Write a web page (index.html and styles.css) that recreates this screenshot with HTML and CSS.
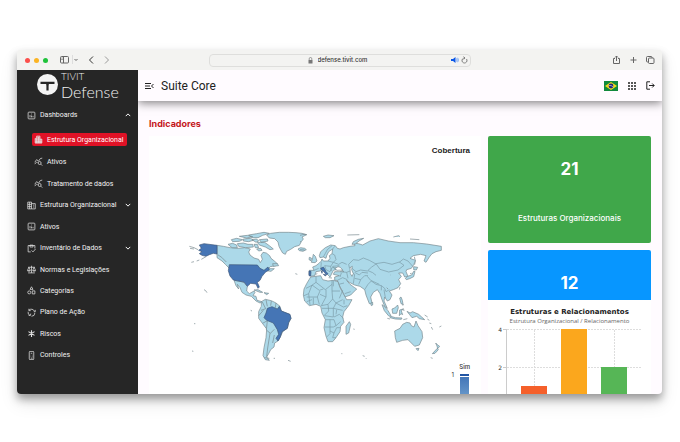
FILE: index.html
```html
<!DOCTYPE html>
<html lang="pt-BR">
<head>
<meta charset="utf-8">
<meta name="viewport" content="width=device-width, initial-scale=1">
<title>Suite Core</title>
<link rel="stylesheet" href="styles.css">
</head>
<body>
<div class="window">
  <div class="titlebar">
    <div class="tools">
      <span class="light red"></span><span class="light yellow"></span><span class="light green"></span>
      <button class="chrome-btn side" aria-label="Barra lateral"><svg width="18" height="10" viewBox="0 0 18 10"><rect x=".5" y="1.500" width="8" height="6.500" rx="1"/><path d="M3.500 1.500V8M1.500 3h1M1.500 4.500h1"/><path d="M12.500 0v9" stroke="#ddd"/><path d="M14.500 4l1.500 1.500L17.500 4"/></svg></button>
      <button class="chrome-btn" aria-label="Voltar"><svg width="6" height="10" viewBox="0 0 6 10"><path d="M5 1.500L1.500 5 5 8.500" stroke="#333"/></svg></button>
      <button class="chrome-btn" aria-label="Avançar"><svg width="6" height="10" viewBox="0 0 6 10"><path d="M1 1.500L4.500 5 1 8.500" stroke="#999"/></svg></button>
    </div>
    <div class="address">
      <svg width="5" height="7" viewBox="0 0 5 7"><rect x=".5" y="3" width="4" height="3.500" fill="#777"/><path d="M1.200 3V1.800a1.300 1.300 0 0 1 2.600 0V3" fill="none" stroke="#777" stroke-width=".7"/></svg>
      <input type="text" aria-label="Endereço" value="defense.tivit.com">
      <span class="address-end">
        <svg width="8" height="8" viewBox="0 0 8 8"><path d="M0 3h2l2.500-2v6L2 5H0z" fill="#0b57e8"/><path d="M5.500 2.500q1 1.500 0 3M6.700 1.800q1.300 2.200 0 4.400" fill="none" stroke="#4c8cf5" stroke-width=".7"/></svg>
        <svg width="7" height="8" viewBox="0 0 7 8"><path d="M5.500 3A2.500 2.500 0 1 1 3.300 2M2.600.6L4 2 2.700 3.400" fill="none" stroke="#666" stroke-width=".8"/></svg>
      </span>
    </div>
    <div class="tools end">
      <button class="chrome-btn" aria-label="Compartilhar"><svg width="9" height="10" viewBox="0 0 9 10"><path d="M3 3.500H1.500v5h6v-5H6M4.500 6V1M3 2.500L4.500 1 6 2.500"/></svg></button>
      <button class="chrome-btn" aria-label="Nova aba"><svg width="9" height="10" viewBox="0 0 9 10"><path d="M4.500 2v6M1.500 5h6"/></svg></button>
      <button class="chrome-btn" aria-label="Abas"><svg width="9" height="10" viewBox="0 0 9 10"><rect x="2.500" y="3" width="5.500" height="5.500" rx="1"/><path d="M2.500 7H1.500a1 1 0 0 1-1-1V2.500a1 1 0 0 1 1-1H5a1 1 0 0 1 1 1V3"/></svg></button>
    </div>
  </div>

  <div class="app">
    <aside class="sidebar">
      <div class="brand">
        <svg width="21" height="21" viewBox="0 0 21 21"><circle cx="10.500" cy="10.500" r="10.500" fill="#f4f4f4"/><path d="M3.500 8.800h14M10.500 9v7.500" stroke="#262626" stroke-width="2.200" fill="none"/><path d="M8 9.500q2 .3 2 2.500h1q0-2.200 2-2.500z" fill="#262626"/></svg>
        <div class="brand-text"><span class="brand-top">TIVIT</span><span class="brand-name">Defense</span></div>
      </div>
      <nav>
        <ul class="menu">
          <li>
            <a class="item group" href="#"><svg class="ico" viewBox="0 0 24 24"><rect x="3" y="3" width="18" height="18" rx="2"/><path d="M8 11v6M12 7v2M12 12v5M16 13v4"/></svg>Dashboards<svg class="chev" viewBox="0 0 8 8"><path d="M1 5.500l3-3 3 3"/></svg></a>
            <ul class="sub">
              <li><a class="item active" href="#"><svg class="ico" viewBox="0 0 24 24"><path d="M3 21V9h4V3h9v8h5v10zM3 21h18" fill="#fff5" /><path d="M7 9v12M12 5v16M16 11v10M3 13h18M7 8h9M3 17h18"/></svg>Estrutura Organizacional</a></li>
              <li><a class="item" href="#"><svg class="ico" viewBox="0 0 24 24"><path d="M2 14l5-7 5 4 5-7 5-1M2 19l5-6 2 2"/><circle cx="15" cy="16" r="4"/><path d="M18 19l4 4"/></svg>Ativos</a></li>
              <li><a class="item" href="#"><svg class="ico" viewBox="0 0 24 24"><path d="M2 14l5-7 5 4 5-7 5-1M2 19l5-6 2 2"/><circle cx="15" cy="16" r="4"/><path d="M18 19l4 4"/></svg>Tratamento de dados</a></li>
            </ul>
          </li>
          <li><a class="item group" href="#"><svg class="ico" viewBox="0 0 24 24"><path d="M2 3h10v18H2zM12 7h10v14H12M2 9h10M2 15h10M7 3v18M16 11h3M16 16h3"/></svg>Estrutura Organizacional<svg class="chev" viewBox="0 0 8 8"><path d="M1 2.500l3 3 3-3"/></svg></a></li>
          <li><a class="item" href="#"><svg class="ico" viewBox="0 0 24 24"><rect x="3" y="3" width="18" height="18" rx="2"/><path d="M8 11v6M12 7v2M12 12v5M16 13v4"/></svg>Ativos</a></li>
          <li><a class="item group" href="#"><svg class="ico" viewBox="0 0 24 24"><path d="M10 21H3V4h18v8M8 3v5h8V3zM12 17l4 4 7-8"/></svg>Inventário de Dados<svg class="chev" viewBox="0 0 8 8"><path d="M1 2.500l3 3 3-3"/></svg></a></li>
          <li><a class="item" href="#"><svg class="ico" viewBox="0 0 24 24"><path d="M12 2v19M3 21h18M3 6h18M5 6l-4 9h8zM19 6l-4 9h8zM2 16h6M16 16h6"/></svg>Normas e Legislações</a></li>
          <li><a class="item" href="#"><svg class="ico" viewBox="0 0 24 24"><path d="M12 2l4 7H8z"/><circle cx="6" cy="17" r="4"/><path d="M14 13h7v8h-7z"/></svg>Categorias</a></li>
          <li><a class="item group" href="#"><svg class="ico" viewBox="0 0 24 24"><path d="M20 9A9 9 0 0 0 5 6M3 10a9 9 0 0 0 5 10M12 22a9 9 0 0 0 9-9M5 2v5h5M4 19l5 1 1-5M22 5v5h-4"/></svg>Plano de Ação</a></li>
          <li><a class="item" href="#"><svg class="ico bold" viewBox="0 0 24 24"><path d="M12 3v18M4 7l16 10M20 7L4 17"/></svg>Riscos</a></li>
          <li><a class="item group" href="#"><svg class="ico" viewBox="0 0 24 24"><rect x="6" y="1" width="12" height="22" rx="2"/><path d="M10 6h4M10 11h1M14 11h1M10 15h1M14 15h1M10 19h5"/></svg>Controles</a></li>
        </ul>
      </nav>
    </aside>

    <div class="content">
      <header class="header">
        <button class="plain" aria-label="Recolher menu"><svg width="9" height="8" viewBox="0 0 9 8"><path d="M0 1.500h6M0 4h5M0 6.500h6M8.500 2L6.500 4l2 2" fill="none" stroke="#222"/></svg></button>
        <h1>Suite Core</h1>
        <div class="actions">
          <button class="plain" aria-label="Português"><svg width="14" height="10" viewBox="0 0 14 10"><path fill="#118a3c" d="M0 0h14v10H0z"/><path fill="#f5d91b" d="M7 1l6 4-6 4-6-4z"/><circle cx="7" cy="5" r="2.400" fill="#20277a"/><path d="M4.800 4.500q2.500-.5 4.300 1.300" fill="none" stroke="#dfe6ef" stroke-width=".6"/></svg></button>
          <button class="plain" aria-label="Aplicativos"><svg width="8" height="8" viewBox="0 0 8 8"><path d="M0 1h2M3 1h2M6 1h2M0 4h2M3 4h2M6 4h2M0 7h2M3 7h2M6 7h2" stroke="#222" stroke-width="1.600"/></svg></button>
          <button class="plain" aria-label="Sair"><svg width="9" height="9" viewBox="0 0 9 9"><path d="M4 .8H.8v7.400H4M3 4.500h5M6.200 2.500l2 2-2 2" fill="none" stroke="#222"/></svg></button>
        </div>
      </header>

      <main class="main">
        <h2>Indicadores</h2>
        <div class="board">
          <section class="map-card">
            <h3>Cobertura</h3>
            <svg class="map" viewBox="0 0 810 426" role="img" aria-label="Mapa de cobertura">
              <g class="land">
                <path d="M111 73l19 3 20 4 25 2 20-2 16 4-5 9 4 9 12 9 14 4 5 10 6-10-4-12 6-9 10 2 10 8 4 8 10 8 10 9-6 5-16 3-6 6 18 0-10 8-14-2-8 7-12-4-5-9-86-1-12-12-10-10-15-10z"/>
                <path d="M144 70l14-3 12 5 2 8-16 0zM172 68l18-2 14 4 14 0 2 8-24 2-20-4zM154 56l16-4 18 4-10 5-20 1zM190 54l22-2 8 6-14 4-16-2zM178 46l24-3 16 4-18 4zM206 42l24-4 22-4 16 3-20 6-14 7-18 0zM216 56l14-2 6 6-8 4zM232 64l22 0 14 10 12 10-10 2-14-8-18-6zM222 70l10 0 4 10-10 0zM238 56l24-2 2 6-20 4zM230 84l12-2 4 6-10 2zM278 128l14 0 4 6-16 2z"/>
                <path d="M260 42l12-5 26-3 28 0 22 1 18 2 14 4-14 7 4 6-6 8-6 11-14 4-12 8-12 6-4 9-8-4-6-10-5-10-3-13-10-10-16-2zM354 84l8-4 12 2 5 4-10 5-11-2z"/>
                <path d="M162 178l18 3 12 3 10 12-2 14 8 8 14-8 3 4-6 10 9 2 3 12 15 4-6 4-12-6-14-14-16-4-12-8-6-14-8-10 4 14-8-10zM222 207l12-1 14 8-8 0zM252 215l14 2-6 4z"/>
                <path d="M244 242l12-7 18 4 14 7 12 10 4 14 24 10 5 12-7 14-4 16-14 10-6 14-8 14-10 6-2 12-10 8-6 12-6 10 8 10-12-2-7-12 3-24 6-30 2-26-12-16-12-16 0-20 8-16z"/>
                <path d="M247 243l10 20-14 5M258 236l4 20M274 240l-2 14M288 246l-2 14M236 284l14-16M248 307l14-8-3 28 12 10 12-12M270 337l-7 44-3 26M283 342l-5 24M253 410l15 2"/>
              </g>
              <g class="covered">
                <path d="M58 72l14-4 39 5 0 26-11-2-12 4-10 5-12-3-8-5 8-6-10-4 8-6z"/>
                <path d="M148 131l84 1 8 10 12 6 12-10 4 8-12 8-10 12-6 12-8 6 6 14-4 4-6-13-16-2-10 9-10-13-12-2-20-4-10-12-5-16z"/>
                <path d="M262 262l14-5 16 7 6-8 6 14 10 4 16 6 3 12-7 12-4 18-16 10-6 18-6 10-6-8 8-12-4-14-12-20-20-8-8-8 6-14z"/>
              </g>
              <path class="coast" d="M78 107l-14 8M58 117l-8 3M42 122l-8 2M28 76l14 4 12 6M30 82l12 2M72 206l5 3 4 6M212 268l4 2M42 308l4 0M36 390l4 1M324 418l8 3M346 158l6 2M281 412l4 0M113 101l12 8 14 14"/>
              <g transform="translate(360)">
                <g class="land">
                  <path d="M58 104l4-12 14-12 16-8 14 2 6 8 8 2 10-4 20-4 15-2-5-8 15 2 13 4 22-12 25-7 30 7 35 5 40 0 40 4 44 7 0 12-16 4-12 6-8 10-10 16-6-4 6-16-16-4-22 4-10 8 16 6-4 12-8 12-14 4-2 6 6 14-10 2-6-12-12 0 8 10-8 10 6 12-8 12-14 6-12 4 8 12-6 14-8 4-8-12-2 12 10 22-8-6-8-20-6-18-8-12-12 8-8 14 4 18-8 2-10-26-4-16-14-10-16-4-16-8-8-6 10 12 14 10 6 4-18 18-18 6-8-20-10-18-4-12-8 0 0-10 14-4-18-4 4-8 16 0 12 0-14-10-10 4-8 2-4 8-6 12-8-8-8-10-8-4-6 4-12 2-4 12-12 2-5-6 1-12 14 0-4-10 10-4 10-8 6-6 2-6 4 6 14 0 6-8-2-8 8-6 2-14-12 8-6 12-2 8-8-4-10 2z"/>
                  <path d="M32 168l30-4 6 12 16 4 16-2 14 4 6 18 10 18 10 18 16 0-10 18-14 18-4 16 4 16-10 12-2 16-12 18-10 12-14 0-6-16-6-26 4-24-10-20-4-20-14-6-20 4-14-14-4-18 2-18 8-16z"/>
                  <path d="M138 316l10-14 4 8-6 26-8 4zM34 124l4-14 2-10 6 6 5 14-6 5zM27 116l1-7 6 2-1 8zM212 248l6-4 0 8-4 2z"/>
                  <path d="M284 330l16-8 8-12 12-6 10 2 4 8 8 4 6-18 6 14 12 18 2 18-10 22-14 4-10-10-10-10-16 2-18 6-4-14zM348 383l9-1-3 7zM407 366l6 6 6 4-6 7-2-8zM412 382l3 4-10 11-8 1z"/>
                  <path d="M246 251l8 6 10 12 9 15-6 2-14-17zM272 286l14 4 20 1-2 4-18-1-16-4zM276 264l8-3 9-9 2 8-5 17-12 0zM299 267l10-3-5 6 4 11-5-3-5 6zM321 271l9 5 8-4 18 8 8 7 10 9-16-3-8-7-14 4-8-10zM299 231l4-3 4 10 2 12-6-2zM316 172l7-6 12-4 6-11 4 0-4 16-12 6-10 3zM341 137l12 2-4 8-8-1zM343 107l3 12-2 12M374 282l9 6"/>
                  <path d="M70 46l14-4 18 2-12 6-14 0zM142 42l36-1M280 48l16-4 4 3M330 54l28 2M156 70l4-8 15-7 16-3-14 8-11 9z"/>
                  <path class="border" d="M70 108l12-22 14-12M98 84l6-8M96 98l8 4 4 14-8 8 16 6 10-6 14 6M84 120l16 4-8 12-18-2M64 124l-2 22M42 148l14-6M74 134l4 12 12 6 6-12 14 0M92 136l2 14M108 148l-10-12 20-2M146 130l14-14 16 2 14-7 18 7 20 11-14 10-12 11-20-3-14 5-12-10-8-2zM204 149l14 6 10 8M228 128l24-4 24 6 22-7 14 10-18 14-28 6-26-8zM298 124l12-10 14 6 14 16M120 152l20 2 4 18M140 154l10-4 14 10-4 28M164 154l14 8 8-8 18 2M164 172l18 4-6 14M182 176l12-12 10 0M194 206l10-16 10-10 14 10 16 4 0 14M202 166l10 12 26 12M244 194l10 8 4 10 10-6M252 206l4 24M112 178l16-8 14 6M120 168l4-12M134 218l18-6M116 190l16-4"/>
                  <path class="border" d="M18 202l16-8 14-10 0-18M12 224l14-6 10-26 22 16 12-4M48 184l28 22 20-16 0-12M96 190l0 20 24 0M100 178l0 18M26 218l4 34M20 228l32 0 8-18M40 230l0 20M52 228l6 22M60 220l18 8 0-22M78 228l-14 26 20-4 14-16-2-24M98 234l10 12 20-10M108 246l-8 16-34 0M84 250l2 20-14 14M100 262l28 6M108 246l22 12 12-4M100 262l0 26-26-4M76 296l26 0 6 18 14-12M102 288l16-8 12 12M108 280l2-14M74 318l26 0 8-4M90 296l0 42-10 10M90 330l12 6 8-16 10 0M102 336l-4 14 10 0M128 208l-10 24M20 242l16-6M132 236l0 14"/>
                </g>
                <path class="water" d="M150 140l7-4-2 10 5 12-4 8-5-8zM106 142l8-5 7 2 7 8-18 1z"/>
                <path class="covered" d="M27 150l6 1-1 14-5-1zM62 142l8-4 4 6 4 8 6 6-5 4-7-10-8-6zM70 160l8 2-2 3zM64 150l3 1-1 6z"/>
                <path class="coast" d="M0 43l12-3 8 1M0 62l3 0M0 86l14 1M46 160l6-2M394 318l4 8M418 318l6-3M388 306l6 2M188 404l6 2M198 412l2 2M392 410l6 2M160 324l4 1M124 398l3 0M262 292l8 2M310 296l12-3M86 170l10 1M260 200l4 4M300 198l-2 8M306 252l6-1M310 262l2 8M330 158l5-1M270 162l1 0M382 294l6 4"/>
              </g>
            </svg>
            <div class="legend">
              <span class="legend-label">Sim</span>
              <span class="legend-value">1</span>
              <span class="legend-bar"></span>
            </div>
          </section>

          <div class="stats">
            <section class="stat stat-green"><strong>21</strong><span>Estruturas Organizacionais</span></section>
            <section class="stat stat-blue"><strong>12</strong></section>
            <section class="chart">
              <h3>Estruturas e Relacionamentos</h3>
              <p>Estrutura Organizacional / Relacionamento</p>
              <svg viewBox="0 0 163 80" role="img" aria-label="Estruturas e Relacionamentos">
                <path class="grid" d="M19 3.500h135M19 41.500h135M46.500 4v76M126.500 4v76"/>
                <path class="axis" d="M18.500 3v77M15 3.500h4M15 41.500h4"/>
                <text x="14" y="6">4</text><text x="14" y="44">2</text>
                <path fill="#f5602b" d="M33 60h26v20H33z"/><path fill="#fba71d" d="M73 3h26v77H73z"/><path fill="#56b656" d="M113 41h26v39h-26z"/>
              </svg>
            </section>
          </div>
        </div>
      </main>
    </div>
  </div>
</div>
</body>
</html>
```
FILE: styles.css
```css
* { box-sizing: border-box; }
body { margin: 0; padding: 50px 18px 48px 17px; background: #fff; font-family: Roboto, "Liberation Sans", sans-serif; }
h1, h2, h3, p, ul { margin: 0; padding: 0; font-weight: 400; }
ul { list-style: none; }
svg { display: block; flex: none; }
a { color: inherit; text-decoration: none; }
button { border: 0; padding: 0; background: none; display: flex; }

.window { height: calc(100vh - 98px); display: flex; flex-direction: column; overflow: hidden; border-radius: 2px 2px 4px 4px; background: #fffbff; box-shadow: 0 5px 9px rgba(0, 0, 0, .35), 0 9px 18px rgba(0, 0, 0, .1); }

.titlebar { flex: none; height: 20px; display: grid; grid-template-columns: 1fr 262px 1fr; align-items: center; background: #f3f3f1; }
.tools { display: flex; align-items: center; gap: 4px; padding-left: 8px; }
.tools.end { justify-content: flex-end; gap: 8px; padding: 0 7px; }
.light { width: 5px; height: 5px; border-radius: 50%; }
.red { background: #fb4f4b; }
.yellow { background: #fbb423; }
.green { background: #1ec23a; }
.chrome-btn svg { fill: none; stroke: #666; stroke-width: 1; }
.chrome-btn { margin-right: 6px; }
.side { margin-left: 8px; }
.end .chrome-btn { margin-right: 0; }
.address { position: relative; height: 13px; display: flex; align-items: center; justify-content: center; gap: 5px; border: 1px solid #dededc; border-radius: 4px; }
.address input { width: 54px; border: 0; padding: 0; background: none; color: #333; font: 500 6px/10px Inter, sans-serif; }
.address-end { position: absolute; right: 2px; display: flex; gap: 2px; }

.app { flex: 1; min-height: 0; display: flex; }
.sidebar { flex: none; width: 121px; background: #262626; color: #f2f2f2; }
.brand { height: 34px; padding: 4px 0 0 20px; display: flex; gap: 3px; }
.brand-text { display: flex; flex-direction: column; margin-top: -4px; font-family: Lato, sans-serif; font-weight: 300; }
.brand-top { font-size: 10px; line-height: 12px; }
.brand-name { font-size: 16px; line-height: 19px; }
.item { height: 21px; padding: 0 7px 0 10px; display: flex; align-items: center; gap: 4px; font-size: 7px; font-weight: 400; white-space: nowrap; }
.group { height: 22px; }
.ico { width: 9px; height: 9px; fill: none; stroke: #e2e2e2; stroke-width: 2; }
.bold { stroke-width: 3; }
.chev { width: 6px; height: 6px; margin-left: auto; fill: none; stroke: #fff; stroke-width: 1.3; }
.sub { padding: 3px 11px 0 15px; display: grid; gap: 1px; }
.sub .item { padding: 0 2px; }
.sub .active { height: 13px; margin: 4px 0; border-radius: 2px; background: #e01226; color: #fff; }

.content { flex: 1; min-width: 0; display: flex; flex-direction: column; }
.header { flex: none; position: relative; height: 31px; padding: 0 7px; display: flex; align-items: center; gap: 7px; background: #fffbff; box-shadow: 0 2px 9px rgba(0, 0, 0, .5); clip-path: inset(0 0 -16px 0); }
.header h1 { font-size: 12px; line-height: 16px; color: #222; }
.actions { margin-left: auto; display: flex; align-items: center; gap: 10px; }
.main { padding: 16px 11px 0; }
.main h2 { font: 700 9px/14px Inter, sans-serif; color: #c4161c; }
.board { margin-top: 5px; display: grid; grid-template-columns: 332fr 163fr; gap: 7px; }
.map-card { padding: 8px 11px; background: #fff; }
.map-card h3 { text-align: right; font: 700 8px/14px "Liberation Sans", sans-serif; color: #222; }
.map { width: calc(100% - 40px); height: auto; margin: 63px 20px 0; }
.land { fill: #acd9e9; stroke: #75868c; stroke-width: 2; }
.land .border { fill: none; stroke: #7a9aa6; stroke-width: 2; }
.covered { fill: #4575b5; stroke: #3c5679; stroke-width: 2; }
.water { fill: #fff; stroke: #75868c; stroke-width: 2; }
.coast { fill: none; stroke: #75868c; stroke-width: 2; }
.legend { display: grid; grid-template-columns: 1fr 11px; column-gap: 5px; justify-items: end; font: 6px/8px Inter, sans-serif; color: #333; }
.legend-label { grid-column: 1 / 3; font-weight: 500; }
.legend-bar { width: 11px; height: 32px; margin-top: 3px; border: solid #fff; border-width: 0 1px; background: linear-gradient(#2255a4 2px, #fff 2px, #fff 3px, #4376b8 3px, #7aa9d3); }

.stats { min-width: 0; }
.stat { height: 107px; padding-top: 22px; display: flex; flex-direction: column; align-items: center; gap: 25px; border-radius: 2px; color: #fff; font-family: Inter, sans-serif; }
.stat strong { font-size: 17px; line-height: 23px; font-weight: 700; }
.stat span { font-size: 8px; line-height: 24px; font-weight: 500; }
.stat-green { background: #40a74a; }
.stat-blue { height: 50px; margin-top: 7px; border-radius: 2px 2px 0 0; background: #0796ff; }
.chart { background: #fff; padding-top: 7px; text-align: center; }
.chart h3 { font: 700 7px/10px "DejaVu Sans", sans-serif; color: #222; }
.chart p { font: 6px/9px "Open Sans", sans-serif; color: #666; }
.chart svg { width: 100%; height: auto; }
.grid { fill: none; stroke: #ddd; stroke-dasharray: 2 1; }
.axis { fill: none; stroke: #ccc; }
.chart text { font: 6px "DejaVu Sans", sans-serif; fill: #333; text-anchor: end; }
```
